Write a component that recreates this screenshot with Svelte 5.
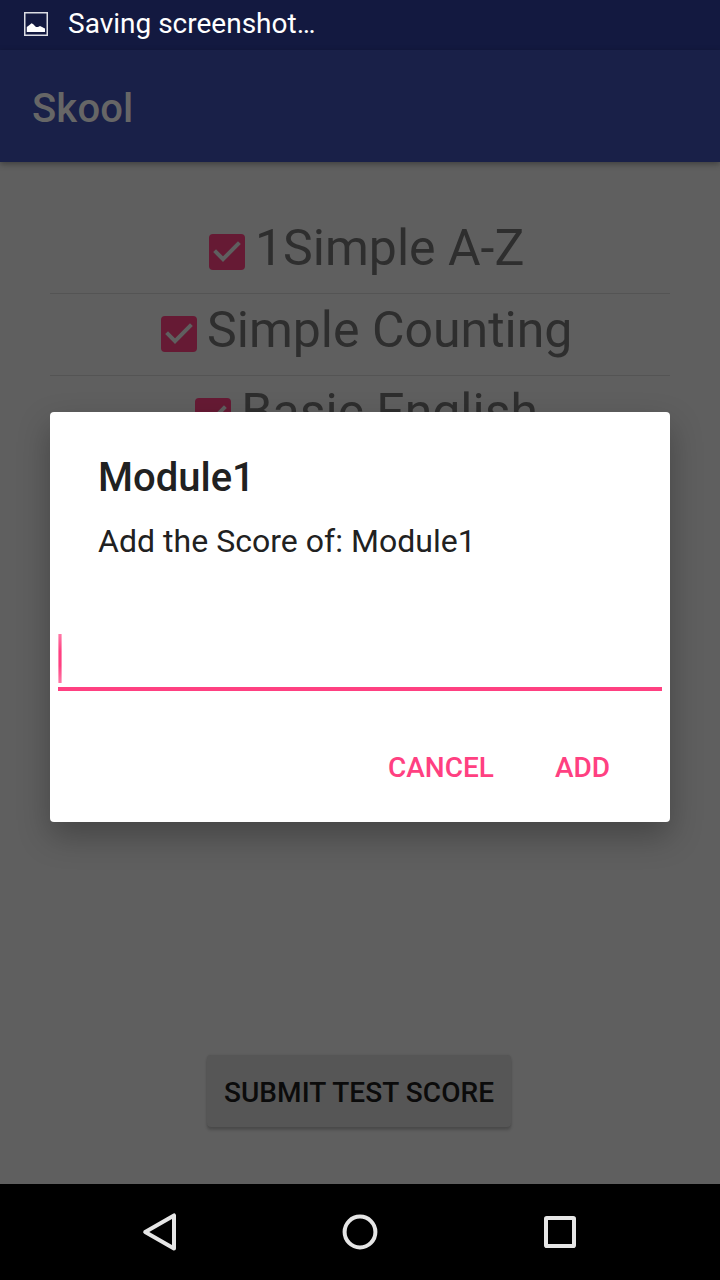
<script>
  const modules = ['1Simple A-Z', 'Simple Counting', 'Basic English'];
</script>

<div class="screen">
  <div class="status">
    <svg width="24" height="24" viewBox="0 0 24 24">
      <rect x="0.75" y="0.75" width="22.5" height="22.5" fill="none" stroke="#dcdde4" stroke-width="1.5" />
      <path d="M2.8 20V15L5.5 13L7.5 11.2L9 12L12 15L14 15L16 14L18 15L21 16.5V20Z" fill="#fff" />
    </svg>
    <span>Saving screenshot…</span>
  </div>
  <header><h1>Skool</h1></header>
  <main>
    <ul>
      {#each modules as name}
        <li>
          <svg class="check" width="36" height="36" viewBox="0 0 36 36">
            <rect width="36" height="36" rx="4" fill="#661a34" />
            <path d="M5.6 16.7L14 25.1L30.4 8.7" fill="none" stroke="#5f5f5f" stroke-width="4" />
          </svg>
          <span>{name}</span>
        </li>
      {/each}
    </ul>
    <button class="submit">SUBMIT TEST SCORE</button>
  </main>
  <nav>
    <svg width="480" height="96" viewBox="120 1184 480 96" fill="none" stroke="#e6e6e6" stroke-width="4" stroke-linejoin="round">
      <path d="M145.2 1232L174 1215.4V1248.6Z" />
      <circle cx="360" cy="1232" r="15.4" />
      <rect x="546" y="1218" width="28" height="28" rx="0.8" />
    </svg>
  </nav>

  <div class="dialog" role="dialog" aria-labelledby="title">
    <h2 id="title">Module1</h2>
    <p>Add the Score of: Module1</p>
    <div class="field"><i></i></div>
    <div class="actions">
      <button class="cancel">CANCEL</button>
      <button>ADD</button>
    </div>
  </div>
</div>

<style>
  :global(body) { margin: 0; }
  .screen {
    position: relative;
    display: flex;
    flex-direction: column;
    width: 720px;
    height: 1280px;
    overflow: hidden;
    background: #5f5f5f;
    font-family: Roboto, sans-serif;
  }
  h1, h2, p, ul { margin: 0; padding: 0; }
  svg { display: block; flex: none; }
  button { border: 0; padding: 0; background: none; font: 500 28px/36px Roboto, sans-serif; }
  .status {
    display: flex;
    align-items: center;
    gap: 20px;
    box-sizing: border-box;
    height: 50px;
    padding: 0 24px 2px;
    background: #131940;
    color: #fff;
    font-size: 28px;
    line-height: 36px;
  }
  header {
    display: flex;
    align-items: center;
    box-sizing: border-box;
    height: 112px;
    padding: 6px 32px 0;
    background: #192048;
    box-shadow: 0 2px 6px rgba(0, 0, 0, .35);
    z-index: 1;
  }
  h1 { color: #666; font-size: 40px; font-weight: 500; line-height: 48px; letter-spacing: .15px; }
  main {
    display: flex;
    flex-direction: column;
    justify-content: space-between;
    align-items: center;
    box-sizing: border-box;
    height: 1022px;
    padding: 50px 50px 57px;
  }
  ul { width: 620px; list-style: none; }
  li {
    display: flex;
    justify-content: center;
    align-items: flex-start;
    gap: 10px;
    box-sizing: border-box;
    height: 82px;
    padding-left: 13.4px;
    border-bottom: 1px solid #545454;
    color: #2e2e2e;
    font-size: 50px;
    line-height: 72px;
    white-space: nowrap;
  }
  li:last-child { border: 0; }
  .check { margin-top: 22px; }
  .submit {
    width: 304px;
    height: 72px;
    margin-right: 2px;
    padding: 4px 0 0;
    border-radius: 4px;
    background: #565656;
    color: #0b0b0b;
    letter-spacing: .08px;
    box-shadow: 0 3px 3px rgba(0, 0, 0, .2), 0 0 2px rgba(0, 0, 0, .12);
  }
  nav { display: flex; justify-content: center; height: 96px; background: #000; }
  .dialog {
    position: absolute;
    z-index: 2;
    left: 50px;
    top: 412px;
    width: 620px;
    height: 410px;
    box-sizing: border-box;
    padding: 42px 8px 0;
    border-radius: 4px;
    background: #fff;
    color: #212121;
    box-shadow: 0 14px 32px rgba(0, 0, 0, .28);
  }
  h2 { padding-left: 40px; font-size: 40px; font-weight: 500; line-height: 48px; }
  p { padding: 19px 0 0 40px; font-size: 32px; line-height: 40px; letter-spacing: .03px; }
  .field { display: flex; height: 53px; margin-top: 73px; border-bottom: 4px solid #ff4081; }
  .field i {
    width: 4px;
    height: 49px;
    background: linear-gradient(90deg, #fff6 1px, transparent 1px 3px, #fff6 3px), linear-gradient(#ff79a7, #ff4081 35% 65%, #ff79a7);
  }
  .actions { display: flex; justify-content: flex-end; gap: 61px; padding: 59px 52px 0 0; }
  .actions button { color: #ff4081; }
</style>
